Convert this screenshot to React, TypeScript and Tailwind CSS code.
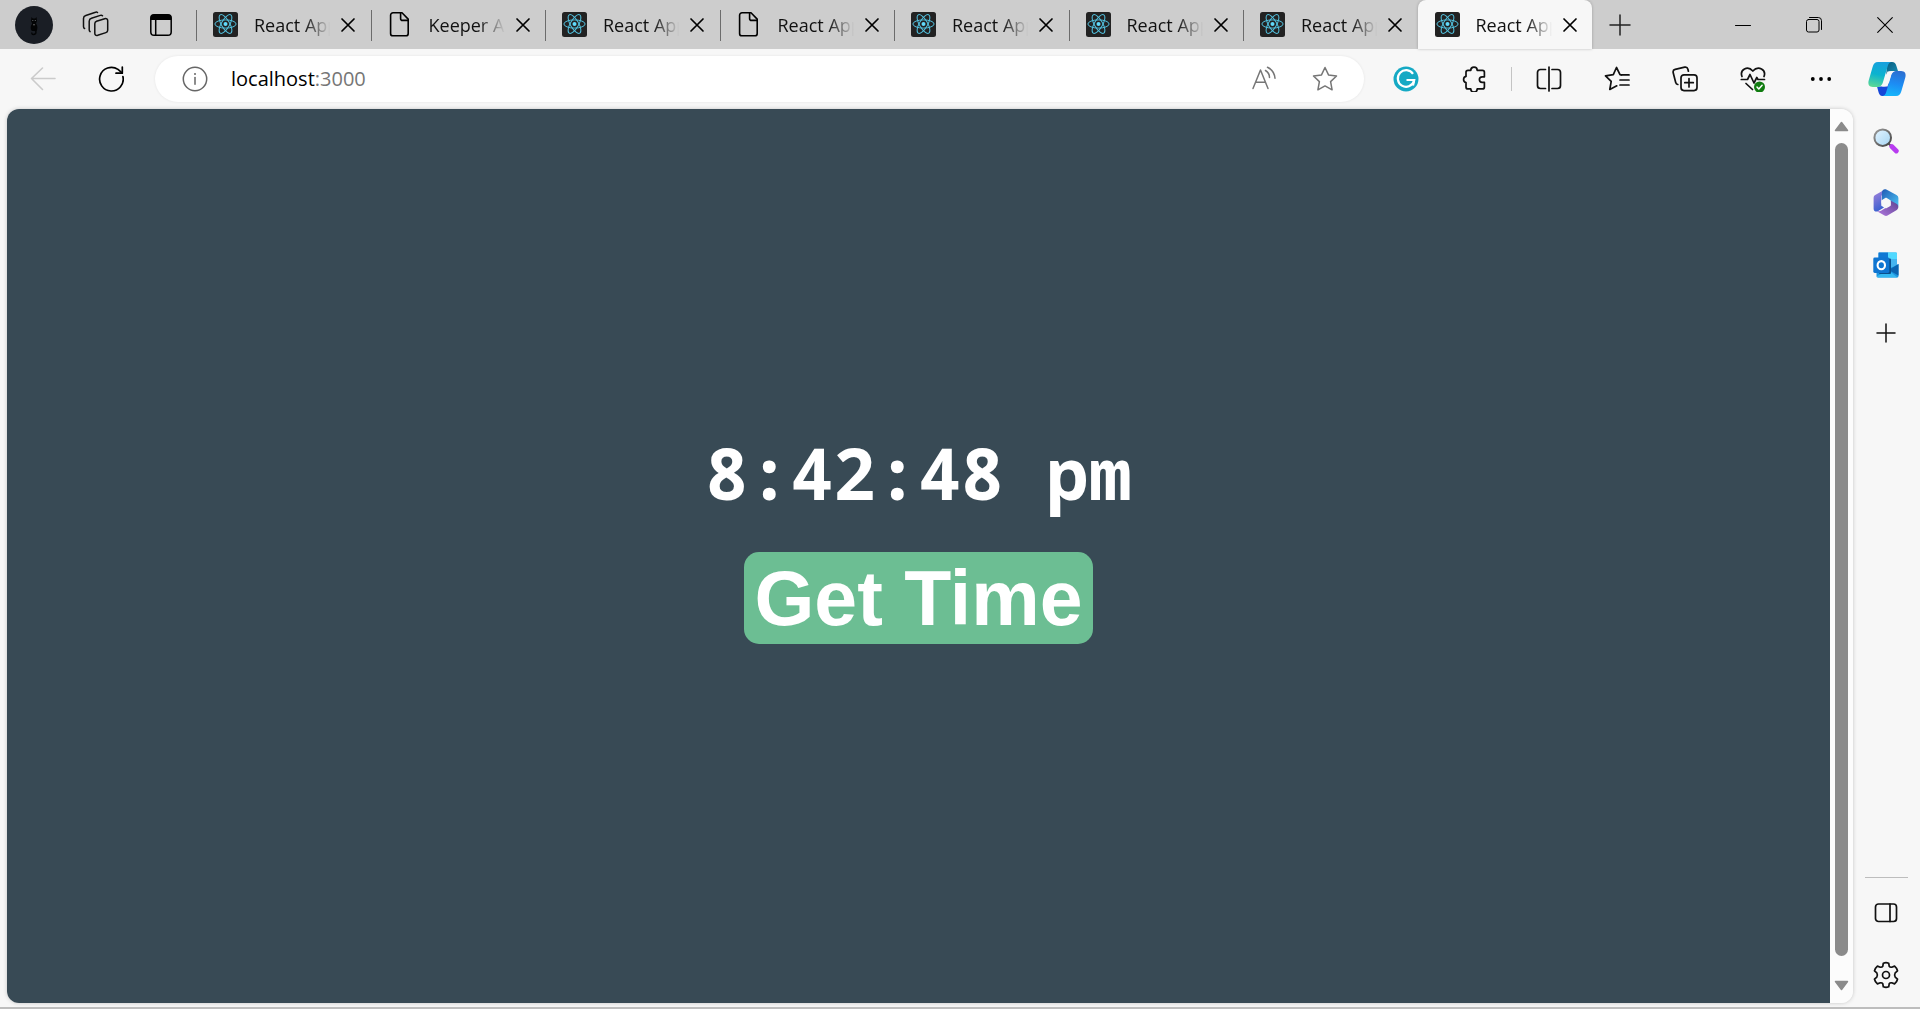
import { useState, type ReactNode } from "react";

type TabKind = "react" | "file";

const tabs: { title: string; kind: TabKind }[] = [
  { title: "React App", kind: "react" },
  { title: "Keeper App", kind: "file" },
  { title: "React App", kind: "react" },
  { title: "React App", kind: "file" },
  { title: "React App", kind: "react" },
  { title: "React App", kind: "react" },
  { title: "React App", kind: "react" },
  { title: "React App", kind: "react" },
];

function Icon({ size = 26, stroke = 1.6, children }: { size?: number; stroke?: number; children: ReactNode }) {
  return (
    <svg
      width={size}
      height={size}
      viewBox={`0 0 ${size} ${size}`}
      fill="none"
      stroke="currentColor"
      strokeWidth={stroke}
      strokeLinecap="round"
      strokeLinejoin="round"
      aria-hidden="true"
      className="shrink-0"
    >
      {children}
    </svg>
  );
}

function ReactFavicon() {
  return (
    <svg width="25" height="25" viewBox="0 0 25 25" className="shrink-0" aria-hidden="true">
      <rect width="25" height="25" rx="2.5" fill="#222222" />
      <g transform="translate(12.5 12)" fill="none" stroke="#53c1de" strokeWidth="1">
        <ellipse rx="10.6" ry="4.1" />
        <ellipse rx="10.6" ry="4.1" transform="rotate(60)" />
        <ellipse rx="10.6" ry="4.1" transform="rotate(120)" />
        <circle r="2" fill="#61dafb" stroke="none" />
      </g>
    </svg>
  );
}

function FileFavicon() {
  return (
    <Icon size={25} stroke={1.6}>
      <path d="M6 .8h8l6.200 6.300v14.300a2.4 2.4 0 0 1-2.4 2.4H5a2.4 2.4 0 0 1-2.4-2.4V3.200A2.4 2.4 0 0 1 5 .8z" />
      <path d="M12.600 1.100v5.300a2 2 0 0 0 2 2h5.300" />
    </Icon>
  );
}

function Tab({ title, kind, active }: { title: string; kind: TabKind; active: boolean }) {
  return (
    <div
      role="tab"
      aria-selected={active}
      className={
        active
          ? "relative flex min-w-0 flex-1 items-center rounded-t-lg bg-[#f7f7f7] pl-[17px] shadow-[0_0_3px_rgba(0,0,0,0.25)]"
          : "relative flex min-w-0 flex-1 items-center pl-[17px]"
      }
    >
      {!active && <span className="absolute left-0 top-[10px] h-[31px] w-px bg-[#6c6c6c]" />}
      {kind === "react" ? <ReactFavicon /> : <FileFavicon />}
      <span className="ml-4 w-[76px] overflow-hidden whitespace-nowrap text-[18px] leading-6 text-[#111] [mask-image:linear-gradient(to_right,black_66%,transparent)]">
        {title}
      </span>
      <button type="button" aria-label={`Close ${title}`} className="ml-[9px] text-black">
        <Icon size={18} stroke={1.7}>
          <path d="M3 3l12 12M15 3L3 15" />
        </Icon>
      </button>
    </div>
  );
}

function ToolButton({ label, className = "", children }: { label: string; className?: string; children: ReactNode }) {
  return (
    <button type="button" aria-label={label} className={`flex w-[68px] shrink-0 items-center justify-center ${className}`}>
      {children}
    </button>
  );
}

function WindowButton({ label, children }: { label: string; children: ReactNode }) {
  return (
    <button type="button" aria-label={label} className="flex w-[71px] items-center justify-center text-black">
      {children}
    </button>
  );
}

function TabStrip() {
  return (
    <div className="flex h-[49px] shrink-0 bg-[#cdcdcd]">
      <div className="flex w-[196px] shrink-0 items-center pl-[2px]">
        <button type="button" aria-label="Profile" className="flex w-[63px] justify-center">
          <svg width="38" height="38" viewBox="0 0 38 38" aria-hidden="true">
            <circle cx="19" cy="19" r="19" fill="#1a1e25" />
            <path
              d="M16.500 11l1.200 1.500h2.600L21.500 11l.5 4-1 2.500c1.800 2 1.800 5.500.6 7.500h-4.800c-1.600-2-1.400-5.500.4-7.500L16 15z"
              fill="#030405"
            />
            <path d="M19 24c3 .5 2.500 4.500-.5 4.500-1.500 0-2-1-1.500-2" fill="none" stroke="#030405" strokeWidth="1.300" />
            <circle cx="17.800" cy="14.500" r=".6" fill="#666b70" />
            <circle cx="20.300" cy="14.500" r=".6" fill="#666b70" />
            <circle cx="19" cy="18.700" r=".7" fill="#858585" />
          </svg>
        </button>
        <button type="button" aria-label="Workspaces" className="flex w-[61px] justify-center text-[#111]">
          <Icon size={28} stroke={1.500}>
            <path d="M14.500 10.200l8.200-2.500c1.700-.5 3 .4 3 2v9.500c0 1.200-.6 2-1.800 2.400l-8.200 2.700c-1.700.5-2.900-.4-2.900-2v-9.600c0-1.200.6-2.100 1.700-2.500z" />
            <path d="M20.500 4.800c-.6-.6-1.300-.7-2.200-.4L9.500 7.300C8 7.800 7.200 8.700 7.200 10.200v8.600c0 .9.300 1.500.9 1.900" />
            <path d="M15.500 1.500c-.6-.5-1.200-.5-2-.2L3.800 4.500C2.300 5 1.500 6 1.500 7.400v8c0 1 .4 1.700 1.100 2.100" />
          </Icon>
        </button>
        <button type="button" aria-label="Tab actions menu" className="flex w-[69px] justify-center text-black">
          <Icon size={24} stroke={1.500}>
            <rect x="1.800" y="1.800" width="20.400" height="20.400" rx="3.300" />
            <path d="M6.700 7v15" />
            <path d="M5 1.500h14a3.300 3.300 0 0 1 3.300 3.300V7H1.700V4.800A3.300 3.300 0 0 1 5 1.500z" fill="currentColor" stroke="none" />
          </Icon>
        </button>
      </div>
      <div role="tablist" aria-label="Open tabs" className="flex max-w-[1396px] flex-1">
        {tabs.map((tab, i) => (
          <Tab key={i} title={tab.title} kind={tab.kind} active={i === tabs.length - 1} />
        ))}
      </div>
      <button type="button" aria-label="New tab" className="flex w-[56px] items-center justify-center text-[#222]">
        <Icon size={24} stroke={1.500}>
          <path d="M12 2v20M2 12h20" />
        </Icon>
      </button>
      <div className="ml-auto flex shrink-0">
        <WindowButton label="Minimize">
          <Icon size={16} stroke={1}>
            <path d="M0.500 8.500h15" />
          </Icon>
        </WindowButton>
        <WindowButton label="Restore">
          <Icon size={16} stroke={1}>
            <rect x=".5" y="2.500" width="12.500" height="12.500" rx="2" />
            <path d="M3.500 .500h8.800a3.200 3.200 0 0 1 3.200 3.200v8.800" />
          </Icon>
        </WindowButton>
        <WindowButton label="Close">
          <Icon size={16} stroke={1.100}>
            <path d="M.7 .7l14.600 14.600M15.300 .7L.7 15.300" />
          </Icon>
        </WindowButton>
      </div>
    </div>
  );
}

function CopilotIcon() {
  return (
    <svg width="40" height="36" viewBox="0 0 40 36" aria-hidden="true">
      <defs>
        <linearGradient id="cpA" x1="0.500" y1="0" x2="0.300" y2="1">
          <stop offset="0" stopColor="#17a0dd" />
          <stop offset=".5" stopColor="#0bb3cf" />
          <stop offset="1" stopColor="#5bd895" />
        </linearGradient>
        <linearGradient id="cpB" x1="0.600" y1="0" x2="0.400" y2="1">
          <stop offset="0" stopColor="#2c6fd1" />
          <stop offset=".5" stopColor="#1c8cf4" />
          <stop offset="1" stopColor="#16b6fb" />
        </linearGradient>
        <linearGradient id="cpC" x1="0" y1="0" x2="1" y2="1">
          <stop offset="0" stopColor="#0a5a7c" />
          <stop offset="1" stopColor="#1690b8" />
        </linearGradient>
      </defs>
      <path d="M20 1h5c2.500 0 3.700 1.600 4.400 4l1.600 5h-6.500c-3 0-4.500 1.500-5.300 4z" fill="url(#cpC)" />
      <path d="M10 25.500h7c2.500 0 4-1.500 4.800-4L24 30l-4 5h-4.500c-2.500 0-3.400-1.800-4-4z" fill="#1647d8" />
      <path
        d="M11 1h13.500c-2.200.3-3 1.800-3.800 4.300L16 21c-1.100 3.500-2.500 5-6 5H6c-4 0-5.300-2.800-4.300-6.500L5.600 6C6.600 2.600 8 1 11 1z"
        fill="url(#cpA)"
      />
      <path
        d="M29 35H15.500c2.200-.3 3-1.800 3.800-4.300L24 15c1.100-3.500 2.500-5 6-5h4c4 0 5.300 2.800 4.300 6.500L34.400 30c-1 3.400-2.400 5-5.400 5z"
        fill="url(#cpB)"
      />
      <path d="M20.500 10.500h6c-1.500.8-2.100 2.200-2.700 4.200L20.500 25.500h-5.500c1-.9 1.500-2.200 2-4z" fill="#f7f7f7" />
    </svg>
  );
}

function Toolbar() {
  return (
    <div className="flex h-[60px] shrink-0 py-[7px] pl-[9px] text-[#111]">
      <ToolButton label="Back" className="text-[#cbcbcb]">
        <Icon size={26}>
          <path d="M25 12.500H1.500M12.500 2L1.500 12.500 12.500 23.500" />
        </Icon>
      </ToolButton>
      <ToolButton label="Refresh" className="text-black">
        <Icon size={26} stroke={1.700}>
          <path d="M24.900 10.500A11.800 11.800 0 1 1 20 3.400l4 3.400" />
          <path d="M24.300 1v6.200h-6.300" />
        </Icon>
      </ToolButton>
      <div className="ml-[10px] flex min-w-0 flex-1 items-center rounded-full bg-white pl-[27px] pr-[26px] shadow-[0_0_3px_rgba(0,0,0,0.08)]">
        <button type="button" aria-label="View site information" className="text-[#666]">
          <Icon size={26} stroke={1.500}>
            <circle cx="13" cy="13" r="11.700" />
            <path d="M13 11.500v6.800" />
            <circle cx="13" cy="8" r="1" fill="currentColor" stroke="none" />
          </Icon>
        </button>
        <a href="http://localhost:3000" className="ml-[23px] text-[20px] leading-7 text-black">
          localhost<span className="text-[#767676]">:3000</span>
        </a>
        <button type="button" aria-label="Read aloud" className="ml-auto text-[#767676]">
          <Icon size={26} stroke={1.500}>
            <path d="M2 22.500L9.500 4 17 22.500M4.700 16.300h9.600" />
            <path d="M14.500 4.500c2.500 1.500 4 4 4 7M16.500 1.300c4.500 2 7 6 7.500 11" />
          </Icon>
        </button>
        <button type="button" aria-label="Add this page to favorites" className="ml-[35px] text-[#767676]">
          <Icon size={26} stroke={1.500}>
            <path d="M13 1.500l3.500 7.400 8 1.100-5.900 5.600 1.500 8.200L13 19.900l-7.100 3.900 1.500-8.200L1.500 10l8-1.100z" />
          </Icon>
        </button>
      </div>
      <ToolButton label="Grammarly" className="ml-2">
        <svg width="26" height="26" viewBox="0 0 26 26" aria-hidden="true">
          <circle cx="13" cy="13" r="12.500" fill="#15a9c4" />
          <path d="M20 7.800A8.300 8.300 0 1 0 21 15.200" fill="none" stroke="#fff" strokeWidth="2.200" />
          <path d="M13.500 14h7.700l-1.200 5.500" fill="none" stroke="#fff" strokeWidth="2.200" />
        </svg>
      </ToolButton>
      <ToolButton label="Extensions">
        <Icon size={26} stroke={1.700}>
          <path d="M9.800 4.300a3.200 3.200 0 0 1 6.400 0h5.200a2 2 0 0 1 2 2v4.500h-2.200a2.800 2.800 0 0 0 0 5.600h2.200v4.500a2 2 0 0 1-2 2h-5.200a3.200 3.200 0 0 1-6.400 0H7a2 2 0 0 1-2-2v-4.300a3.200 3.200 0 0 1 0-6.200V6.300a2 2 0 0 1 2-2z" />
        </Icon>
      </ToolButton>
      <span className="mx-[3px] my-[11px] w-px bg-[#c4c4c4]" />
      <ToolButton label="Split screen">
        <Icon size={26} stroke={1.700}>
          <path d="M9.500 3.500h-5a3 3 0 0 0-3 3v13a3 3 0 0 0 3 3h5M16 3.500h5.500a3 3 0 0 1 3 3v13a3 3 0 0 1-3 3H16M13 1v24" />
        </Icon>
      </ToolButton>
      <ToolButton label="Favorites">
        <Icon size={26} stroke={1.700}>
          <path d="M17.500 8.900l-1.500-.3L12.500 1.500 9.300 8.600 1.500 9.800l5.700 5.600-1.400 8.100 7-3.700" />
          <path d="M17.500 8.900H25M16 14h9M16 19h9" />
        </Icon>
      </ToolButton>
      <ToolButton label="Collections">
        <Icon size={26} stroke={1.700}>
          <rect x="9" y="8.800" width="16" height="15.800" rx="3" />
          <path d="M17 12.500v8.500M12.800 16.700h8.500" />
          <path d="M5.800 18.500c-1.200-.2-1.800-.9-2.100-2L1.200 6.700c-.4-1.700.4-2.900 2-3.300l9.500-2.200c1.600-.3 2.800.4 3.200 2l.5 2" />
        </Icon>
      </ToolButton>
      <ToolButton label="Browser essentials">
        <Icon size={26} stroke={1.700}>
          <path d="M2 10.500C-.5 4 7.500-1 12.800 5 18.500-1 26.500 4 24 10.500" />
          <path d="M1.300 13.500h6.200l2.500-5 4 8.500 2.800-5.500 1.200 2h6.500M6 17.500l6.500 6" />
          <circle cx="19.500" cy="21" r="5.500" fill="#107c10" stroke="none" />
          <path d="M17 21l1.800 1.900 3.300-3.700" stroke="#fff" strokeWidth="1.500" />
        </Icon>
      </ToolButton>
      <ToolButton label="Settings and more" className="text-black">
        <Icon size={26}>
          <g fill="currentColor" stroke="none">
            <circle cx="4.800" cy="13" r="1.900" />
            <circle cx="13" cy="13" r="1.900" />
            <circle cx="21.200" cy="13" r="1.900" />
          </g>
        </Icon>
      </ToolButton>
      <button type="button" aria-label="Copilot" className="flex w-[65px] shrink-0 items-center justify-center pr-[2px]">
        <CopilotIcon />
      </button>
    </div>
  );
}

function SideButton({ label, className = "", children }: { label: string; className?: string; children: ReactNode }) {
  return (
    <button type="button" aria-label={label} className={`flex h-[62px] w-full items-center justify-center ${className}`}>
      {children}
    </button>
  );
}

function Sidebar() {
  return (
    <aside className="flex w-[67px] shrink-0 flex-col pt-[1px] pr-[2px] text-[#111]">
      <SideButton label="Search">
        <svg width="26" height="26" viewBox="0 0 26 26" aria-hidden="true">
          <defs>
            <linearGradient id="lens" x1="0" y1="0" x2="1" y2="1">
              <stop offset="0" stopColor="#e4f4ff" />
              <stop offset="1" stopColor="#a5d5f3" />
            </linearGradient>
            <linearGradient id="rim" x1="0" y1="0" x2="1" y2="1">
              <stop offset="0" stopColor="#9c9c9c" />
              <stop offset="1" stopColor="#414141" />
            </linearGradient>
          </defs>
          <path d="M15.500 15.500l3 3" stroke="#555" strokeWidth="2" />
          <circle cx="9.700" cy="9.700" r="8.300" fill="url(#lens)" stroke="url(#rim)" strokeWidth="2" />
          <path d="M18.800 18.500l4.500 4.500" stroke="#b83cf0" strokeWidth="4.800" strokeLinecap="round" />
        </svg>
      </SideButton>
      <SideButton label="Microsoft 365">
        <svg width="26" height="28" viewBox="0 0 26 28" aria-hidden="true">
          <defs>
            <linearGradient id="mA" x1="0" y1="0" x2="0.300" y2="1">
              <stop offset="0" stopColor="#a884dc" />
              <stop offset="1" stopColor="#3d62d0" />
            </linearGradient>
            <linearGradient id="mB" x1="0" y1="0" x2="1" y2="1">
              <stop offset="0" stopColor="#215bb5" />
              <stop offset="1" stopColor="#4cc5f4" />
            </linearGradient>
            <linearGradient id="mC" x1="0" y1="1" x2="1" y2="0">
              <stop offset="0" stopColor="#b178df" />
              <stop offset="1" stopColor="#5d4391" />
            </linearGradient>
          </defs>
          <path d="M11.500.7L2.200 6A3 3 0 0 0 .6 8.700v11c0 2.600 2.700 3.600 4.600 2.400L11 18.600 8.500 14V7z" fill="url(#mA)" />
          <path d="M9 3.500c0-2.300 2-4 4.800-2.700L23.500 6A3.300 3.300 0 0 1 25.400 9v8.500L17.500 13 13 9.700l-4 2.500z" fill="url(#mB)" />
          <path d="M17.500 11.500l6 3.300c2.300 1.300 2.500 4.800.3 6.100l-9.300 5.700a3 3 0 0 1-3 0l-7.500-4.400c3 .5 4.200-.7 6-1.700l7.500-4.500z" fill="url(#mC)" />
          <path d="M13 9.500l4 2.300v4.500l-4 2.300-4-2.300v-4.500z" fill="#f7f7f7" stroke="#f7f7f7" strokeWidth="1.500" strokeLinejoin="round" />
        </svg>
      </SideButton>
      <SideButton label="Outlook">
        <svg width="26" height="26" viewBox="0 0 26 26" aria-hidden="true">
          <rect x="5.500" y=".5" width="18.500" height="18" rx="1.200" fill="#28a8ea" />
          <path d="M15 .5h7.800A1.200 1.200 0 0 1 24 1.700V7h-9z" fill="#50d9ff" />
          <path d="M5.500.5H15V7H5.500z" fill="#0f78d4" />
          <path d="M15 7h9v8h-9z" fill="#45b4ef" />
          <path d="M3.500 11.500l11 6.500L25.500 12v12a1.500 1.500 0 0 1-1.500 1.500H5A1.500 1.500 0 0 1 3.500 24z" fill="#1c94e0" />
          <path d="M25.500 12v11.500L15.500 18z" fill="#0a63b0" />
          <path d="M3.500 24.500L15 18l9.500 7.500H5z" fill="#35b8f1" />
          <rect x="6" y="6.500" width="12" height="15.500" rx="1" fill="#0a4f8c" />
          <rect x=".3" y="5.500" width="16" height="15.500" rx="1.400" fill="#0f75d1" />
          <ellipse cx="8.300" cy="13.200" rx="3.700" ry="4.100" fill="none" stroke="#fff" strokeWidth="2.100" />
        </svg>
      </SideButton>
      <SideButton label="Customize" className="mt-[6px]">
        <Icon size={20} stroke={1.500}>
          <path d="M10 1v18M1 10h18" />
        </Icon>
      </SideButton>
      <hr className="mr-[10px] ml-3 mt-auto mb-1 border-[#bdbdbd]" />
      <SideButton label="Hide sidebar">
        <Icon size={24} stroke={1.700}>
          <rect x="1.500" y="3" width="21" height="17.500" rx="3" />
          <path d="M16 3v17.500" />
        </Icon>
      </SideButton>
      <SideButton label="Settings" className="mb-[1px]">
        <Icon size={28} stroke={1.700}>
          <circle cx="14" cy="14" r="3.500" />
          <path d="M11.300 2.200Q14 1.200 16.700 2.200L17.200 5.200Q18 6.500 19.700 6.200L22.600 5.100Q24.900 7 25.500 9.800L23.200 11.900Q22 14 23.200 16.100L25.500 18.200Q24.900 21 22.600 22.900L19.700 21.800Q18 21.500 17.200 22.800L16.700 25.800Q14 26.800 11.300 25.800L10.800 22.800Q10 21.500 8.300 21.800L5.400 22.900Q3.100 21 2.500 18.200L4.800 16.100Q6 14 4.800 11.900L2.500 9.800Q3.100 7 5.400 5.100L8.300 6.200Q10 6.500 10.800 5.200Z" />
        </Icon>
      </SideButton>
    </aside>
  );
}

function ScrollBar() {
  return (
    <div className="flex w-[23px] shrink-0 flex-col items-center bg-[#fcfcfc] py-3 text-[#8b8b8b]" aria-hidden="true">
      <svg width="15" height="11" viewBox="0 0 15 11">
        <path d="M7.500 1.500L13.500 9.500H1.500z" fill="currentColor" stroke="currentColor" strokeWidth="1.500" strokeLinejoin="round" />
      </svg>
      <div className="mt-[11px] mb-6 w-[13px] flex-1 rounded-full bg-[#8b8b8b]" />
      <svg width="15" height="11" viewBox="0 0 15 11">
        <path d="M7.500 9.500L13.500 1.500H1.500z" fill="currentColor" stroke="currentColor" strokeWidth="1.500" strokeLinejoin="round" />
      </svg>
    </div>
  );
}

function ClockPage() {
  const [time, setTime] = useState("8:42:48 pm");
  return (
    <main className="flex min-w-0 flex-1 flex-col items-center justify-center bg-[#384a55] pb-[41px] text-white">
      <h1 className="font-['Noto_Sans_Mono','DejaVu_Sans_Mono',monospace] text-[71px] leading-[90px] font-bold">{time}</h1>
      <button
        type="button"
        onClick={() => setTime(new Date().toLocaleTimeString("en-IN"))}
        className="mt-[34px] rounded-[15px] bg-[#6cbe93] px-[10px] py-[2px] font-['Liberation_Sans',sans-serif] text-[77px] leading-[88px] font-bold"
      >
        Get Time
      </button>
    </main>
  );
}

export default function App() {
  return (
    <div className="flex h-screen flex-col overflow-hidden border-b-2 border-[#bdbdbd] bg-[#f7f7f7] font-['Open_Sans','Noto_Sans',sans-serif]">
      <TabStrip />
      <Toolbar />
      <div className="flex min-h-0 flex-1">
        <div className="mb-1 ml-[7px] flex min-w-0 flex-1 overflow-hidden rounded-xl shadow-[0_0_4px_rgba(0,0,0,0.2)]">
          <ClockPage />
          <ScrollBar />
        </div>
        <Sidebar />
      </div>
    </div>
  );
}
